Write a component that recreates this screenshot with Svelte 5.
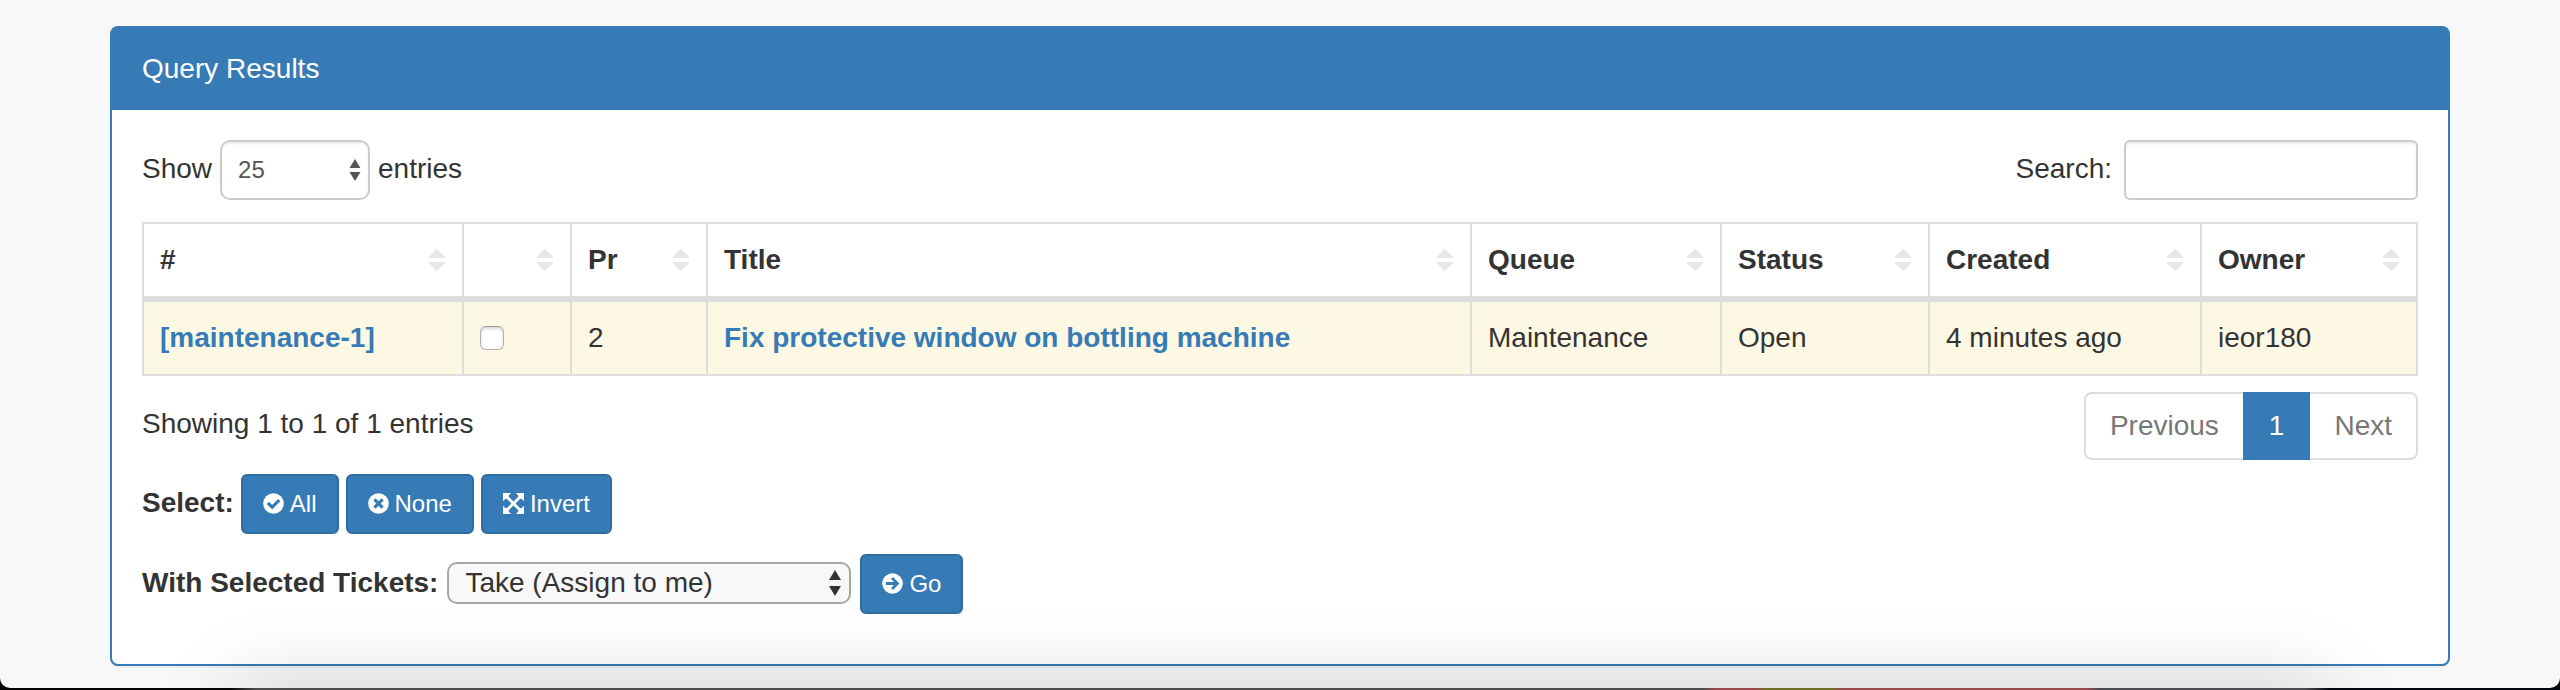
<script>
  const columns = [
    { label: '#', cls: 'c-id' },
    { label: '', cls: 'c-check' },
    { label: 'Pr', cls: 'c-pr' },
    { label: 'Title', cls: 'c-title' },
    { label: 'Queue', cls: 'c-queue' },
    { label: 'Status', cls: 'c-status' },
    { label: 'Created', cls: 'c-created' },
    { label: 'Owner', cls: 'c-owner' }
  ];

  let tickets = $state([
    {
      id: 'maintenance-1',
      priority: 2,
      title: 'Fix protective window on bottling machine',
      queue: 'Maintenance',
      status: 'Open',
      created: '4 minutes ago',
      owner: 'ieor180',
      selected: false
    }
  ]);

  let pageSize = $state('25');
  let action = $state('take');
  let search = $state('');

  function setAll(value) {
    tickets.forEach((t) => (t.selected = value));
  }

  function invert() {
    tickets.forEach((t) => (t.selected = !t.selected));
  }
</script>

<div class="window">
  <main class="page">
    <section class="panel">
      <h1 class="heading">Query Results</h1>
      <div class="body">
        <div class="toolbar">
          <div class="line">
            <label for="page-size">Show</label>
            <span class="select small">
              <select id="page-size" bind:value={pageSize}>
                <option>10</option>
                <option>25</option>
                <option>50</option>
                <option>100</option>
              </select>
              <svg width="12" height="22" viewBox="0 0 12 22" aria-hidden="true">
                <path d="M6 0 11.5 9H.5zM6 22 .5 13h11z" />
              </svg>
            </span>
            <span>entries</span>
          </div>
          <div class="line search">
            <label for="search">Search:</label>
            <input id="search" type="search" bind:value={search} />
          </div>
        </div>

        <table>
          <colgroup>
            {#each columns as c}
              <col class={c.cls} />
            {/each}
          </colgroup>
          <thead>
            <tr>
              {#each columns as c}
                <th scope="col">
                  <button class="sort" type="button" aria-label={c.label || 'Selected'}>
                    <span>{c.label}</span>
                    <svg width="18" height="24" viewBox="0 0 18 24" aria-hidden="true">
                      <path d="M8.2 1.4q.8-.8 1.6 0l7 7q1 1.6-.6 1.6H1.8Q.2 10 1.2 8.4zM8.2 22.6q.8.8 1.6 0l7-7q1-1.6-.6-1.6H1.8q-1.6 0-.6 1.6z" />
                    </svg>
                  </button>
                </th>
              {/each}
            </tr>
          </thead>
          <tbody>
            {#each tickets as t}
              <tr>
                <td><a href="#{t.id}">[{t.id}]</a></td>
                <td class="check"><input type="checkbox" aria-label={t.id} bind:checked={t.selected} /></td>
                <td>{t.priority}</td>
                <td><a href="#{t.id}">{t.title}</a></td>
                <td>{t.queue}</td>
                <td>{t.status}</td>
                <td>{t.created}</td>
                <td>{t.owner}</td>
              </tr>
            {/each}
          </tbody>
        </table>

        <div class="footer">
          <span class="info">Showing 1 to 1 of 1 entries</span>
          <nav class="pages" aria-label="Pages">
            <button type="button">Previous</button>
            <button type="button" class="active">1</button>
            <button type="button">Next</button>
          </nav>
        </div>

        <div class="line picks">
          <strong>Select:</strong>
          <button class="btn" type="button" onclick={() => setAll(true)}>
            <svg class="icon" viewBox="0 0 21 21" aria-hidden="true">
              <circle cx="10.5" cy="10.5" r="10.3" />
              <path class="cut" d="m4.8 9.8 4.4 4.4L16.2 7.2" />
            </svg>All
          </button>
          <button class="btn" type="button" onclick={() => setAll(false)}>
            <svg class="icon" viewBox="0 0 21 21" aria-hidden="true">
              <circle cx="10.5" cy="10.5" r="10.3" />
              <path class="cut" d="m6.4 6.4 8.2 8.2m0-8.2-8.2 8.2" />
            </svg>None
          </button>
          <button class="btn" type="button" onclick={invert}>
            <svg class="icon" viewBox="0 0 21 21" aria-hidden="true">
              <path d="M0 0h8.2L5.9 2.3 5.7 3.7l4.8 4.8 4.8-4.8-.2-1.4L12.8 0H21v8.2l-2.3-2.3-1.4-.2-4.8 4.8 4.8 4.8 1.4-.2 2.3-2.3V21h-8.2l2.3-2.3.2-1.4-4.8-4.8-4.8 4.8.2 1.4L8.2 21H0v-8.2l2.3 2.3 1.4.2 4.8-4.8-4.8-4.8-1.4.2L0 8.2z" />
            </svg>Invert
          </button>
        </div>

        <div class="line bulk">
          <label for="action"><strong>With Selected Tickets:</strong></label>
          <span class="select wide">
            <select id="action" bind:value={action}>
              <option value="take">Take (Assign to me)</option>
            </select>
            <svg width="14" height="26" viewBox="0 0 14 26" aria-hidden="true">
              <path d="M7 0 13 10H1zM7 26 1 16h12z" />
            </svg>
          </span>
          <button class="btn" type="button">
            <svg class="icon" viewBox="0 0 21 21" aria-hidden="true">
              <circle cx="10.5" cy="10.5" r="10.3" />
              <path class="cut arrow" d="M3.8 10.5h11M10 5l5.5 5.5L10 16" />
            </svg>Go
          </button>
        </div>
      </div>
    </section>
    <div class="shade"></div>
  </main>
</div>

<style>
  :global(body) {
    margin: 0;
    background: #050507;
  }

  .window {
    padding-bottom: 2px;
    background: linear-gradient(
      90deg,
      #050507 9%,
      #4c4c4c 10% 66.5%,
      #99484c 67% 68.5%,
      #6f7026 69% 71.5%,
      #99484c 72% 81.5%,
      #4c4c50 82% 90%,
      #050810 91%
    );
    color: #333;
    font: 28px/40px "Helvetica Neue", "Liberation Sans", Arial, sans-serif;
  }

  .window *,
  .window {
    box-sizing: border-box;
  }

  .page {
    position: relative;
    overflow: hidden;
    padding: 26px 110px 22px;
    border-radius: 0 0 10px 10px;
    background: #f8f8f8;
  }

  .panel {
    border: 2px solid #367bb5;
    border-radius: 8px;
    background: #fff;
    box-shadow: 0 2px 2px rgba(0, 0, 0, 0.05);
  }

  .heading {
    margin: 0;
    padding: 21px 30px;
    background: #367bb5;
    color: #fff;
    font-size: 28px;
    font-weight: 400;
  }

  .body {
    padding: 30px 30px 50px;
  }

  .toolbar {
    display: flex;
    justify-content: space-between;
    margin-bottom: 22px;
  }

  .line {
    display: flex;
    align-items: baseline;
    gap: 8px;
  }

  .search {
    gap: 12px;
  }

  button,
  select,
  input {
    margin: 0;
    font: inherit;
    color: inherit;
  }

  .select {
    display: inline-grid;
    align-items: center;
  }

  .select select {
    grid-area: 1 / 1;
    appearance: none;
  }

  .select svg {
    grid-area: 1 / 1;
    justify-self: end;
    margin-right: 9px;
    fill: currentColor;
    pointer-events: none;
  }

  .small {
    color: #555;
  }

  .small select {
    width: 150px;
    height: 60px;
    padding: 0 16px;
    border: 2px solid #ccc;
    border-radius: 10px;
    background: #fff;
    box-shadow: inset 0 2px 2px rgba(0, 0, 0, 0.075);
    font-size: 24px;
  }

  .wide select {
    width: 404px;
    height: 42px;
    padding: 0 16px;
    border: 2px solid #a6a6a6;
    border-radius: 10px;
    background: #f8f8f8;
    line-height: 32px;
  }

  .search input {
    width: 294px;
    height: 60px;
    padding: 10px 20px;
    border: 2px solid #ccc;
    border-radius: 6px;
    background: #fff;
    box-shadow: inset 0 2px 2px rgba(0, 0, 0, 0.075);
    font-size: 24px;
    appearance: none;
  }

  table {
    width: 100%;
    border: 2px solid #ddd;
    border-collapse: separate;
    border-spacing: 0;
    table-layout: fixed;
  }

  .c-id { width: 320px; }
  .c-check { width: 108px; }
  .c-pr { width: 136px; }
  .c-queue { width: 250px; }
  .c-status { width: 208px; }
  .c-created { width: 272px; }
  .c-owner { width: 214px; }

  th,
  td {
    padding: 16px;
    border-right: 2px solid #ddd;
    text-align: left;
  }

  th:last-child,
  td:last-child {
    border-right: 0;
  }

  th {
    border-bottom: 6px solid #ddd;
  }

  td {
    background: #fcf8e3;
  }

  .sort {
    display: flex;
    align-items: center;
    justify-content: space-between;
    width: 100%;
    height: 40px;
    padding: 0;
    border: 0;
    background: none;
    font-weight: 700;
  }

  .sort svg {
    fill: #e8e8e8;
  }

  a {
    color: #367bb5;
    font-weight: 700;
    text-decoration: none;
  }

  .check input {
    display: block;
    width: 24px;
    height: 24px;
    border: 1px solid #b0b0b0;
    border-top-color: #999;
    border-radius: 6px;
    background: #fff;
    box-shadow: inset 0 2px 3px rgba(0, 0, 0, 0.15);
    appearance: none;
  }

  .check input:checked {
    background: #367bb5;
  }

  .footer {
    display: flex;
    align-items: center;
    justify-content: space-between;
    margin: 16px 0 14px;
  }

  .info {
    padding-bottom: 4px;
  }

  .pages {
    display: flex;
  }

  .pages button {
    height: 68px;
    padding: 0 24px;
    border: 2px solid #ddd;
    background: #fff;
    color: #777;
  }

  .pages button:first-child {
    border-right: 0;
    border-radius: 8px 0 0 8px;
  }

  .pages button:last-child {
    border-left: 0;
    border-radius: 0 8px 8px 0;
  }

  .pages .active {
    border-color: #367bb5;
    background: #367bb5;
    color: #fff;
  }

  .picks {
    gap: 7px;
  }

  .bulk {
    gap: 9px;
    margin-top: 20px;
  }

  .btn {
    height: 60px;
    padding: 0 20px;
    border: 2px solid #2e6da4;
    border-radius: 6px;
    background: #367bb5;
    color: #fff;
    font-size: 24px;
    line-height: 36px;
  }

  .icon {
    width: 21px;
    height: 21px;
    margin-right: 6px;
    vertical-align: -2px;
    fill: #fff;
  }

  .cut {
    fill: none;
    stroke: #367bb5;
    stroke-width: 3.2;
  }

  .arrow {
    stroke-width: 2.8;
  }

  .shade {
    position: absolute;
    right: 240px;
    bottom: -60px;
    left: 240px;
    height: 60px;
    box-shadow: 0 0 80px 6px rgba(0, 0, 0, 0.15);
    pointer-events: none;
  }
</style>
